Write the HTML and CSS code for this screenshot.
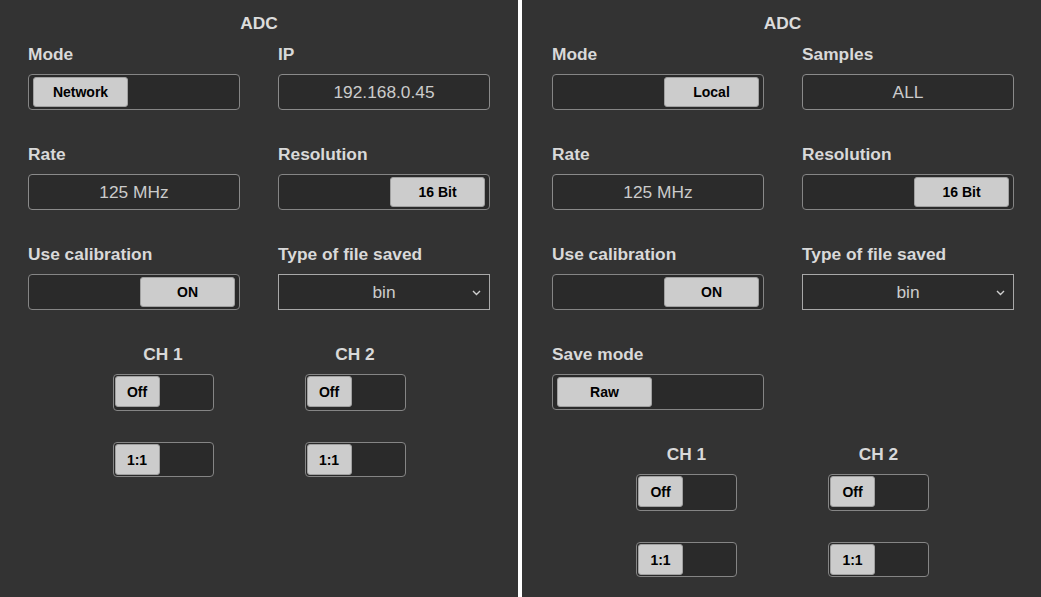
FILE: index.html
```html
<!DOCTYPE html>
<html>
<head>
<meta charset="utf-8">
<link rel="stylesheet" href="styles.css">
</head>
<body>
<div class="screen">
  <section class="panel">
    <h1 class="title">ADC</h1>
    <div class="grid">
      <div class="field">
        <div class="label">Mode</div>
        <div class="toggle"><span class="knob">Network</span></div>
      </div>
      <div class="field">
        <div class="label">IP</div>
        <div class="value">192.168.0.45</div>
      </div>
      <div class="field">
        <div class="label">Rate</div>
        <div class="value">125 MHz</div>
      </div>
      <div class="field">
        <div class="label">Resolution</div>
        <div class="toggle on"><span class="knob">16 Bit</span></div>
      </div>
      <div class="field">
        <div class="label">Use calibration</div>
        <div class="toggle on"><span class="knob">ON</span></div>
      </div>
      <div class="field">
        <div class="label">Type of file saved</div>
        <div class="select"><span>bin</span>
          <svg class="chev" width="9" height="6" viewBox="0 0 9 6"><path d="M1 1 L4.5 4.5 L8 1" fill="none" stroke="#cfcfcf" stroke-width="1.4"/></svg>
        </div>
      </div>
    </div>
    <div class="channels">
      <div class="channel">
        <div class="ch-label">CH 1</div>
        <div class="mini tall"><span class="knob">Off</span></div>
        <div class="mini"><span class="knob">1:1</span></div>
      </div>
      <div class="channel">
        <div class="ch-label">CH 2</div>
        <div class="mini tall"><span class="knob">Off</span></div>
        <div class="mini"><span class="knob">1:1</span></div>
      </div>
    </div>
  </section>

  <section class="panel wide">
    <h1 class="title">ADC</h1>
    <div class="grid">
      <div class="field">
        <div class="label">Mode</div>
        <div class="toggle on"><span class="knob">Local</span></div>
      </div>
      <div class="field">
        <div class="label">Samples</div>
        <div class="value">ALL</div>
      </div>
      <div class="field">
        <div class="label">Rate</div>
        <div class="value">125 MHz</div>
      </div>
      <div class="field">
        <div class="label">Resolution</div>
        <div class="toggle on"><span class="knob">16 Bit</span></div>
      </div>
      <div class="field">
        <div class="label">Use calibration</div>
        <div class="toggle on"><span class="knob">ON</span></div>
      </div>
      <div class="field">
        <div class="label">Type of file saved</div>
        <div class="select"><span>bin</span>
          <svg class="chev" width="9" height="6" viewBox="0 0 9 6"><path d="M1 1 L4.5 4.5 L8 1" fill="none" stroke="#cfcfcf" stroke-width="1.4"/></svg>
        </div>
      </div>
      <div class="field">
        <div class="label">Save mode</div>
        <div class="toggle"><span class="knob">Raw</span></div>
      </div>
    </div>
    <div class="channels">
      <div class="channel">
        <div class="ch-label">CH 1</div>
        <div class="mini tall"><span class="knob">Off</span></div>
        <div class="mini"><span class="knob">1:1</span></div>
      </div>
      <div class="channel">
        <div class="ch-label">CH 2</div>
        <div class="mini tall"><span class="knob">Off</span></div>
        <div class="mini"><span class="knob">1:1</span></div>
      </div>
    </div>
  </section>
</div>
</body>
</html>
```

FILE: styles.css
```css
* { box-sizing: border-box; }

html, body {
  margin: 0;
  padding: 0;
  background: #ffffff;
}

body {
  font-family: "Liberation Sans", Arial, sans-serif;
}

.screen {
  display: flex;
  gap: 4px;
  width: 1041px;
  height: 597px;
  overflow: hidden;
}

.panel {
  width: 518px;
  height: 597px;
  background: #333333;
  padding: 13px 28px 0 28px;
  flex: none;
}

.panel.wide {
  width: 519px;
  padding-left: 30px;
}

.title {
  margin: 0 0 11px 0;
  font-size: 17.33px;
  line-height: 20px;
  font-weight: bold;
  color: #dcdcdc;
  text-align: center;
}

.grid {
  display: grid;
  grid-template-columns: 212px 212px;
  column-gap: 38px;
  row-gap: 34px;
}

.label {
  font-size: 17.33px;
  line-height: 20px;
  font-weight: bold;
  color: #d9d9d9;
  margin-bottom: 10px;
}

.value {
  height: 36px;
  border: 1px solid #8a8a8a;
  border-radius: 4px;
  background: #2b2b2b;
  color: #cccccc;
  font-size: 17.33px;
  display: flex;
  align-items: center;
  justify-content: center;
}

.toggle {
  height: 36px;
  border: 1px solid #858585;
  border-radius: 4px;
  background: #2a2a2a;
  padding: 2px 4px;
  display: flex;
  align-items: stretch;
}

.toggle.on {
  justify-content: flex-end;
}

.knob {
  background: #cccccc;
  border: 1px solid #a0a0a0;
  border-radius: 3px;
  color: #000000;
  font-weight: bold;
  font-size: 14px;
  display: flex;
  align-items: center;
  justify-content: center;
}

.toggle .knob {
  width: 95px;
}

.select {
  position: relative;
  height: 36px;
  border: 1px solid #a8a8a8;
  background: #2b2b2b;
  color: #cccccc;
  font-size: 17.33px;
  display: flex;
  align-items: center;
  justify-content: center;
}

.chev {
  position: absolute;
  right: 8px;
  top: 15px;
}

.channels {
  display: flex;
  justify-content: center;
  gap: 91px;
  margin-top: 34px;
}

.channel {
  width: 101px;
  display: flex;
  flex-direction: column;
}

.ch-label {
  font-size: 17.33px;
  line-height: 20px;
  font-weight: bold;
  color: #d9d9d9;
  text-align: center;
  margin-bottom: 10px;
}

.mini {
  height: 35px;
  border: 1px solid #858585;
  border-radius: 4px;
  background: #2a2a2a;
  padding: 1px;
  display: flex;
  align-items: stretch;
}

.mini.tall {
  height: 37px;
  margin-bottom: 31px;
  padding-bottom: 3px;
}

.mini .knob {
  width: 45px;
  font-size: 14px;
}
```
